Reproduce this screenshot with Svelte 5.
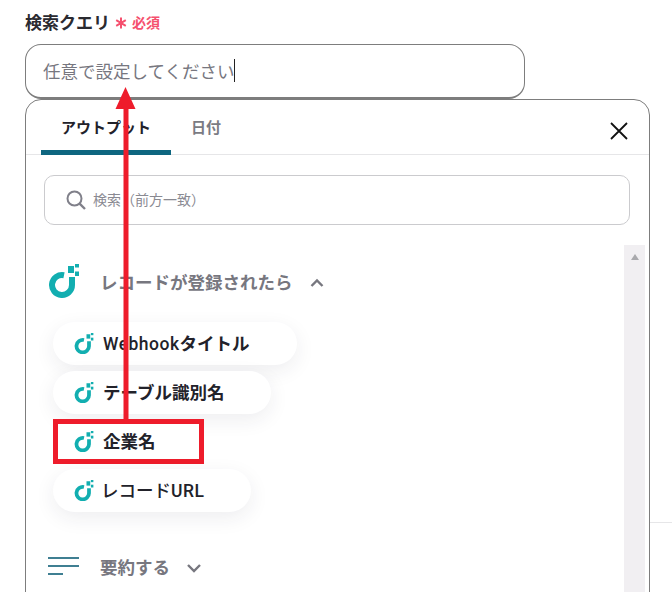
<script lang="ts">
  const outputs = [
    { latin: 'Webhook', label: 'タイトル' },
    { label: 'テーブル識別名' },
    { label: '企業名', marked: true },
    { label: 'レコード', latinAfter: 'URL', thin: true }
  ]
</script>

{#snippet yoomIcon(width)}
  <svg class="logo" {width} height={width * 34 / 32} viewBox="0 0 32 34" aria-hidden="true">
    <path d="M16 11.2 A10 10 0 1 0 24 21 V13" fill="none" stroke="#12aeb0" stroke-width="6" />
    <rect x="20" y="2" width="6" height="7" fill="#12aeb0" />
    <rect x="27" y="0" width="4" height="3.5" fill="#12aeb0" />
    <rect x="27" y="7.5" width="4" height="4.5" fill="#12aeb0" />
  </svg>
{/snippet}

<div class="page">
  <div class="field-label">
    <span class="label-text">検索クエリ</span>
    <svg class="asterisk" width="12" height="12" viewBox="0 0 12 12" aria-hidden="true">
      <path d="M6 0.5 V11.5 M1.2 3.2 L10.8 8.8 M10.8 3.2 L1.2 8.8" stroke="#f5506e" stroke-width="2" fill="none" />
    </svg>
    <span class="required">必須</span>
  </div>

  <div class="query-input">
    <span class="placeholder">任意で設定してください</span>
    <span class="caret"></span>
  </div>

  <div class="panel">
    <div class="tabs">
      <div class="tab active">アウトプット</div>
      <div class="tab">日付</div>
      <svg class="close" width="20" height="20" viewBox="0 0 20 20" aria-hidden="true">
        <path d="M2 2 L18 18 M18 2 L2 18" stroke="#111" stroke-width="1.8" fill="none" />
      </svg>
    </div>

    <div class="search">
      <svg width="22" height="22" viewBox="0 0 22 22" aria-hidden="true">
        <circle cx="9.5" cy="9.5" r="7" fill="none" stroke="#80808a" stroke-width="2" />
        <path d="M14.6 14.6 L20 20" stroke="#80808a" stroke-width="2.4" />
      </svg>
      <span class="search-text">検索（前方一致）</span>
    </div>

    <div class="body">
      <div class="list">
        <div class="group-head">
          {@render yoomIcon(32)}
          <span class="group-title">レコードが登録されたら</span>
          <svg width="16" height="10" viewBox="0 0 16 10" aria-hidden="true">
            <path d="M2.5 8 L8 2.5 L13.5 8" fill="none" stroke="#77777f" stroke-width="2.4" />
          </svg>
        </div>

        <div class="pills">
          {#each outputs as item}
            <div class="pill" class:marked={item.marked}>
              {@render yoomIcon(20)}
              <span class="pill-text" class:thin={item.thin}>
                {#if item.latin}<span class="latin">{item.latin}</span>{/if}{item.label}{#if item.latinAfter}<span class="latin">{item.latinAfter}</span>{/if}
              </span>
            </div>
          {/each}
        </div>

        <div class="group-head second">
          <svg class="lines" width="32" height="18" viewBox="0 0 32 18" aria-hidden="true">
            <path d="M0 1 H31 M0 9 H31 M0 17 H15" stroke="#3f7f92" stroke-width="2" fill="none" />
          </svg>
          <span class="group-title">要約する</span>
          <svg width="16" height="10" viewBox="0 0 16 10" aria-hidden="true">
            <path d="M2 2 L8 8 L14 2" fill="none" stroke="#77777f" stroke-width="2.4" />
          </svg>
        </div>
      </div>

      <div class="scrollbar">
        <span class="scroll-up"></span>
      </div>
    </div>
  </div>

  <div class="side-rule"></div>

  <!-- annotation drawn over the screenshot -->
  <svg class="arrow" width="24" height="336" viewBox="0 0 24 336" aria-hidden="true">
    <path d="M11.5 0 L21.5 22 H14.5 V336 H9.5 V22 H1.5 Z" fill="#ee1c2b" />
  </svg>
</div>

<style>
  :global(body) {
    background: #fff;
  }

  .page {
    position: relative;
    width: 672px;
    height: 592px;
    overflow: hidden;
    box-sizing: border-box;
    padding: 11px 0 0 25px;
    background: #fff;
    font-family: "Noto Sans CJK JP", "Noto Sans", sans-serif;
  }

  .field-label {
    display: flex;
    align-items: center;
    height: 20px;
    margin-bottom: 13px;
  }

  .label-text {
    font-size: 17px;
    font-weight: 700;
    color: #2a2a30;
  }

  .asterisk {
    margin: 3px 0 0 5px;
  }

  .required {
    margin: 1px 0 0 5px;
    font-size: 14px;
    font-weight: 700;
    color: #f5506e;
  }

  .query-input {
    display: flex;
    align-items: center;
    box-sizing: border-box;
    width: 500px;
    height: 55px;
    padding: 0 17px 2px;
    border: 1px solid #7d7d7d;
    border-bottom-width: 2px;
    border-radius: 16px;
    background: #fff;
  }

  .placeholder {
    font-size: 17.5px;
    color: #77777f;
  }

  .caret {
    width: 1px;
    height: 23px;
    background: #222;
  }

  .panel {
    box-sizing: border-box;
    width: 625px;
    height: 520px;
    border: 1px solid #7d7d7d;
    border-radius: 16px;
    background: #fff;
  }

  .tabs {
    position: relative;
    display: flex;
    height: 55px;
    box-sizing: border-box;
    padding-left: 15px;
    border-bottom: 1px solid #e6e6e8;
  }

  .tab {
    display: flex;
    align-items: center;
    justify-content: center;
    height: 55px;
    box-sizing: border-box;
    padding-bottom: 3px;
    width: 70px;
    font-size: 15px;
    font-weight: 700;
    color: #7b7b83;
  }

  .tab.active {
    width: 130px;
    padding: 3px 0 0;
    color: #22222a;
    border-bottom: 5px solid #0e6680;
    border-radius: 4px 4px 0 0;
  }

  .close {
    position: absolute;
    top: 21px;
    right: 20px;
  }

  .search {
    display: flex;
    align-items: center;
    gap: 6px;
    box-sizing: border-box;
    width: 586px;
    height: 50px;
    margin: 20px 0 0 18px;
    padding-left: 20px;
    border: 1px solid #cbcbce;
    border-radius: 10px;
    font-size: 14px;
    color: #8a8a92;
  }

  .search-text {
    margin-top: -2px;
  }

  .body {
    display: flex;
    justify-content: space-between;
    height: 347px;
    margin-top: 20px;
    padding-right: 4px;
  }

  .list {
    flex: 1;
    padding: 18px 0 0 22px;
  }

  .group-head {
    display: flex;
    align-items: center;
    height: 36px;
  }

  .group-head svg:last-child {
    margin-left: 16px;
    margin-top: 3px;
  }

  .group-title {
    margin-left: 20px;
    font-size: 17.5px;
    font-weight: 700;
    color: #77777f;
  }

  .pills {
    display: flex;
    flex-direction: column;
    align-items: flex-start;
    gap: 6px;
    margin: 23px 0 0 5px;
  }

  .pill {
    display: flex;
    align-items: center;
    gap: 9px;
    box-sizing: border-box;
    height: 43px;
    padding: 0 47px 0 21px;
    border-radius: 22px;
    background: #fff;
    font-size: 17.5px;
    font-weight: 700;
    color: #22222a;
    box-shadow: 0 6px 20px rgba(40, 40, 60, 0.08);
  }

  .pill-text {
    margin-top: -2px;
    white-space: nowrap;
  }

  .pill-text.thin {
    margin-left: -2px;
    font-weight: 500;
  }

  .latin {
    font-family: Roboto, sans-serif;
    font-weight: 500;
    letter-spacing: 0.5px;
  }

  .pill.marked {
    height: 45px;
    margin: -1px 0 -1px;
    width: 151px;
    padding: 0 0 0 16px;
    border: 5px solid #ee1c2b;
    border-radius: 0;
    box-shadow: none;
  }

  .second {
    margin-top: 36px;
    height: 36px;
  }

  .scrollbar {
    width: 21px;
    background: #f1eff2;
    display: flex;
    justify-content: center;
    padding-top: 9px;
    box-sizing: border-box;
  }

  .scroll-up {
    width: 0;
    height: 0;
    border-left: 4.5px solid transparent;
    border-right: 4.5px solid transparent;
    border-bottom: 6px solid #a9a9ad;
  }

  .side-rule {
    position: absolute;
    left: 650px;
    top: 522px;
    width: 22px;
    height: 1px;
    background: #e6e6e8;
  }

  .arrow {
    position: absolute;
    left: 114px;
    top: 87px;
  }
</style>
